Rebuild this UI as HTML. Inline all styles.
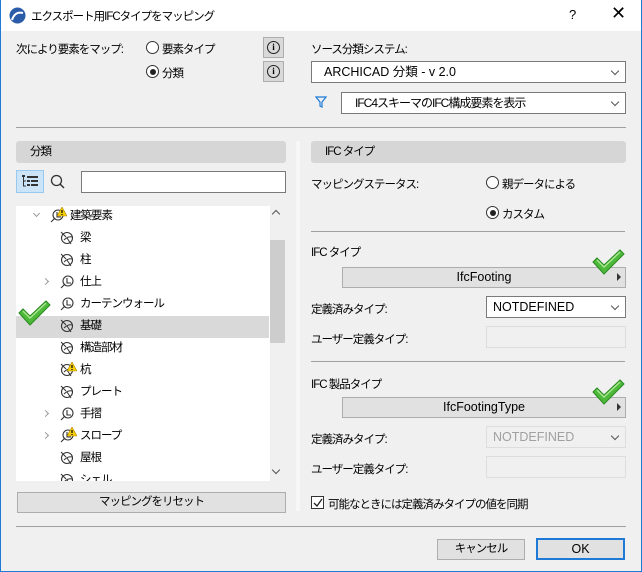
<!DOCTYPE html>
<html><head><meta charset="utf-8"><style>
*{box-sizing:border-box;margin:0;padding:0}
body{width:642px;height:572px;background:#f0f0f0;font-family:"Liberation Sans","Noto Sans CJK JP",sans-serif;font-size:11.5px;letter-spacing:-1px;color:#000;position:relative;overflow:hidden}
.L{font-size:12.5px;letter-spacing:0}
.a{position:absolute;white-space:nowrap}
.win{position:absolute;left:0;top:0;width:642px;height:572px;border:1px solid #1e7ad6;border-top:none;pointer-events:none}
.title{position:absolute;left:0;top:0;width:642px;height:31px;background:#fff}
.hdr{position:absolute;background:#d6d6d6;border-radius:3px;height:22px;line-height:22px;padding-left:14px}
.sep{position:absolute;height:1px;background:#a0a0a0}
.dd{position:absolute;background:#fff;border:1px solid #7a7a7a;height:22px;line-height:20px;padding-left:12px}
.dd:after{content:"";position:absolute;right:7px;top:6px;width:5px;height:5px;border-right:1px solid #555;border-bottom:1px solid #555;transform:rotate(45deg)}
.radio{position:absolute;width:13px;height:13px;border:1px solid #333;border-radius:50%;background:#fff}
.radio.on:after{content:"";position:absolute;left:2.5px;top:2.5px;width:6px;height:6px;border-radius:50%;background:#222}
.info{position:absolute;width:21px;height:21px;background:#d9d9d9;border:1px solid #adadad}
.info span{position:absolute;left:3px;top:3px;width:13px;height:13px;border:1.3px solid #222;border-radius:50%;font:bold 9px "Liberation Serif",serif;text-align:center;line-height:11px;letter-spacing:0}
.btn{position:absolute;background:#e1e1e1;border:1px solid #adadad;text-align:center;height:21px;line-height:19px}
.row{position:absolute;left:16px;width:253px;height:22px;line-height:22px}
.row .t{position:absolute;top:0}
.chev{position:absolute;top:8px;width:5px;height:5px;border-right:1px solid #999;border-bottom:1px solid #999;transform:rotate(-45deg)}
.ic{position:absolute;top:4px}
.inp{position:absolute;border:1px solid #ddd;background:#f0f0f0}
</style></head><body>
<div class="title"></div>
<svg class="a" style="left:9px;top:7px" width="17" height="17" viewBox="0 0 17 17"><circle cx="8.5" cy="8.5" r="8" fill="#2a5caa"/><path d="M3 13 Q6 4 14 6" stroke="#fff" stroke-width="2" fill="none"/></svg>
<div class="a" style="left:31px;top:8px">エクスポート用IFCタイプをマッピング</div>
<div class="a L" style="left:569px;top:7px;font-size:13px">?</div>
<div class="a L" style="left:611px;top:3px;font-size:18px;font-weight:300">✕</div>

<div class="a" style="left:16px;top:41px">次により要素をマップ:</div>
<div class="radio" style="left:146px;top:41px"></div><div class="a" style="left:162px;top:41px">要素タイプ</div>
<div class="radio on" style="left:146px;top:65px"></div><div class="a" style="left:162px;top:65px">分類</div>
<div class="info" style="left:263px;top:37px"><span>i</span></div>
<div class="info" style="left:263px;top:61px"><span>i</span></div>

<div class="a" style="left:311px;top:41px">ソース分類システム:</div>
<div class="dd L" style="left:311px;top:61px;width:315px">ARCHICAD 分類 - v 2.0</div>
<svg class="a" style="left:315px;top:96px" width="12" height="12" viewBox="0 0 12 12"><path d="M1 1H11L7 6V11L5 10V6Z" fill="none" stroke="#1e7ad6" stroke-width="1.2"/></svg>
<div class="dd" style="left:341px;top:92px;width:285px;padding-left:13px;font-size:12px">IFC4スキーマのIFC構成要素を表示</div>
<div class="sep" style="left:16px;top:127px;width:610px"></div>

<div class="hdr" style="left:16px;top:141px;width:270px">分類</div>
<div class="a" style="left:16px;top:170px;width:28px;height:23px;background:#cce4f7;border:1px solid #99c9ef"></div>
<svg class="a" style="left:22px;top:175px" width="17" height="13" viewBox="0 0 17 13"><rect x="0" y="0" width="3" height="2" fill="#333"/><path d="M1.5 2V11H4M1.5 6H4" stroke="#333" fill="none"/><rect x="5" y="1" width="11" height="2" fill="#333"/><rect x="5" y="5" width="3" height="2" fill="#333"/><rect x="9" y="5" width="7" height="2" fill="#333"/><rect x="5" y="9" width="3" height="2" fill="#333"/><rect x="9" y="9" width="7" height="2" fill="#333"/></svg>
<svg class="a" style="left:50px;top:174px" width="16" height="16" viewBox="0 0 16 16"><circle cx="6.5" cy="6.5" r="5" stroke="#333" stroke-width="1.3" fill="none"/><path d="M10 10L14 14" stroke="#333" stroke-width="1.5"/></svg>
<div class="a" style="left:81px;top:171px;width:205px;height:22px;background:#fff;border:1px solid #7a7a7a"></div>

<div class="a" style="left:16px;top:206px;width:254px;height:275px;background:#fff;overflow:hidden"></div>
<div class="a" style="left:270px;top:206px;width:16px;height:275px;background:#f0f0f0"></div>
<div class="a" style="left:270px;top:240px;width:15px;height:103px;background:#cdcdcd"></div>
<div class="a" style="left:273px;top:211px;width:6px;height:6px;border-left:1.3px solid #555;border-top:1.3px solid #555;transform:rotate(45deg)"></div>
<div class="a" style="left:273px;top:467px;width:6px;height:6px;border-right:1.3px solid #555;border-bottom:1.3px solid #555;transform:rotate(45deg)"></div>
<div class="a" style="left:16px;top:316px;width:253px;height:22px;background:#d9d9d9"></div>

<svg width="0" height="0" style="position:absolute"><defs>
<symbol id="lf" viewBox="0 0 14 14"><circle cx="7" cy="7" r="5.5" fill="none" stroke="#333" stroke-width="1.1"/><path d="M1 1L6 6M7 7L11 13M4 9Q8 5 12 6" stroke="#333" fill="none" stroke-width="1"/></symbol>
<symbol id="lf2" viewBox="0 0 14 14"><circle cx="8" cy="6" r="5" fill="none" stroke="#333" stroke-width="1.1"/><path d="M7 3V8H11M5 9L1 13" stroke="#333" fill="none" stroke-width="1.1"/></symbol>
<symbol id="wr" viewBox="0 0 10 10"><path d="M5 0L10 9H0Z" fill="#f5d000" stroke="#b08000" stroke-width=".6"/><path d="M5 3V6M5 7V8" stroke="#000" stroke-width="1.2"/></symbol>
<symbol id="ck" viewBox="0 0 34 26"><path d="M2 13L6 9L13 16L29 1L33 5L13 25Z" fill="#4db83a" stroke="#2a8a20" stroke-width="1"/><path d="M6 11L13 18L29 3" stroke="#a8e890" stroke-width="1.5" fill="none"/></symbol>
</defs></svg>

<div class="row" style="top:205px"><div class="chev" style="left:18px;top:6px;transform:rotate(45deg)"></div><svg class="ic" style="left:34px" width="14" height="14"><use href="#lf2"/></svg><svg class="ic" style="left:41px;top:2px" width="10" height="10"><use href="#wr"/></svg><span class="t" style="left:54px">建築要素</span></div>
<div class="row" style="top:227px"><svg class="ic" style="left:44px" width="14" height="14"><use href="#lf"/></svg><span class="t" style="left:64px">梁</span></div>
<div class="row" style="top:249px"><svg class="ic" style="left:44px" width="14" height="14"><use href="#lf"/></svg><span class="t" style="left:64px">柱</span></div>
<div class="row" style="top:271px"><div class="chev" style="left:27px"></div><svg class="ic" style="left:44px" width="14" height="14"><use href="#lf2"/></svg><span class="t" style="left:64px">仕上</span></div>
<div class="row" style="top:293px"><svg class="ic" style="left:44px" width="14" height="14"><use href="#lf2"/></svg><span class="t" style="left:64px">カーテンウォール</span></div>
<div class="row" style="top:315px"><svg class="ic" style="left:44px" width="14" height="14"><use href="#lf"/></svg><span class="t" style="left:64px">基礎</span></div>
<div class="row" style="top:337px"><svg class="ic" style="left:44px" width="14" height="14"><use href="#lf"/></svg><span class="t" style="left:64px">構造部材</span></div>
<div class="row" style="top:359px"><svg class="ic" style="left:44px" width="14" height="14"><use href="#lf"/></svg><svg class="ic" style="left:51px;top:3px" width="10" height="10"><use href="#wr"/></svg><span class="t" style="left:64px">杭</span></div>
<div class="row" style="top:381px"><svg class="ic" style="left:44px" width="14" height="14"><use href="#lf"/></svg><span class="t" style="left:64px">プレート</span></div>
<div class="row" style="top:403px"><div class="chev" style="left:27px"></div><svg class="ic" style="left:44px" width="14" height="14"><use href="#lf2"/></svg><span class="t" style="left:64px">手摺</span></div>
<div class="row" style="top:425px"><div class="chev" style="left:27px"></div><svg class="ic" style="left:44px" width="14" height="14"><use href="#lf2"/></svg><svg class="ic" style="left:51px;top:2px" width="10" height="10"><use href="#wr"/></svg><span class="t" style="left:64px">スロープ</span></div>
<div class="row" style="top:447px"><svg class="ic" style="left:44px" width="14" height="14"><use href="#lf"/></svg><span class="t" style="left:64px">屋根</span></div>
<div class="row" style="top:469px;height:12px;overflow:hidden"><svg class="ic" style="left:44px" width="14" height="14"><use href="#lf"/></svg><span class="t" style="left:64px">シェル</span></div>
<svg class="a" style="left:17px;top:300px" width="34" height="26"><use href="#ck"/></svg>

<div class="btn" style="left:17px;top:492px;width:269px">マッピングをリセット</div>
<div class="a" style="left:296px;top:141px;width:4px;height:370px;background:#f7f7f7"></div>

<div class="hdr" style="left:311px;top:141px;width:315px">IFC タイプ</div>
<div class="a" style="left:311px;top:176px">マッピングステータス:</div>
<div class="radio" style="left:486px;top:176px"></div><div class="a" style="left:502px;top:176px">親データによる</div>
<div class="radio on" style="left:486px;top:206px"></div><div class="a" style="left:502px;top:206px">カスタム</div>
<div class="sep" style="left:311px;top:231px;width:314px"></div>
<div class="a" style="left:311px;top:244px">IFC タイプ</div>
<div class="btn L" style="left:342px;top:267px;width:284px">IfcFooting</div>
<div class="a" style="left:617px;top:273px;width:0;height:0;border-left:4px solid #333;border-top:4px solid transparent;border-bottom:4px solid transparent"></div>
<svg class="a" style="left:591px;top:249px" width="34" height="26"><use href="#ck"/></svg>
<div class="a" style="left:311px;top:301px">定義済みタイプ:</div>
<div class="dd L" style="left:486px;top:296px;width:140px;padding-left:6px">NOTDEFINED</div>
<div class="a" style="left:311px;top:331px">ユーザー定義タイプ:</div>
<div class="inp" style="left:486px;top:326px;width:140px;height:22px"></div>
<div class="sep" style="left:311px;top:361px;width:314px"></div>
<div class="a" style="left:311px;top:376px">IFC 製品タイプ</div>
<div class="btn L" style="left:342px;top:397px;width:284px">IfcFootingType</div>
<div class="a" style="left:617px;top:403px;width:0;height:0;border-left:4px solid #333;border-top:4px solid transparent;border-bottom:4px solid transparent"></div>
<svg class="a" style="left:591px;top:379px" width="34" height="26"><use href="#ck"/></svg>
<div class="a" style="left:311px;top:431px">定義済みタイプ:</div>
<div class="dd L" style="left:486px;top:426px;width:140px;padding-left:6px;border-color:#ddd;color:#a0a0a0;background:#f0f0f0">NOTDEFINED</div>
<div class="a" style="left:311px;top:461px">ユーザー定義タイプ:</div>
<div class="inp" style="left:486px;top:456px;width:140px;height:22px"></div>
<div class="a" style="left:311px;top:496px;width:13px;height:13px;border:1px solid #333;background:#fff"></div>
<svg class="a" style="left:313px;top:498px" width="10" height="10"><path d="M1 5L4 8L9 1" stroke="#222" stroke-width="1.3" fill="none"/></svg>
<div class="a" style="left:328px;top:496px">可能なときには定義済みタイプの値を同期</div>

<div class="sep" style="left:16px;top:526px;width:610px"></div>
<div class="btn" style="left:437px;top:539px;width:88px">キャンセル</div>
<div class="btn L" style="left:536px;top:538px;width:89px;height:22px;border:2px solid #1e7ad6;line-height:18px">OK</div>
<div class="win"></div>
</body></html>
